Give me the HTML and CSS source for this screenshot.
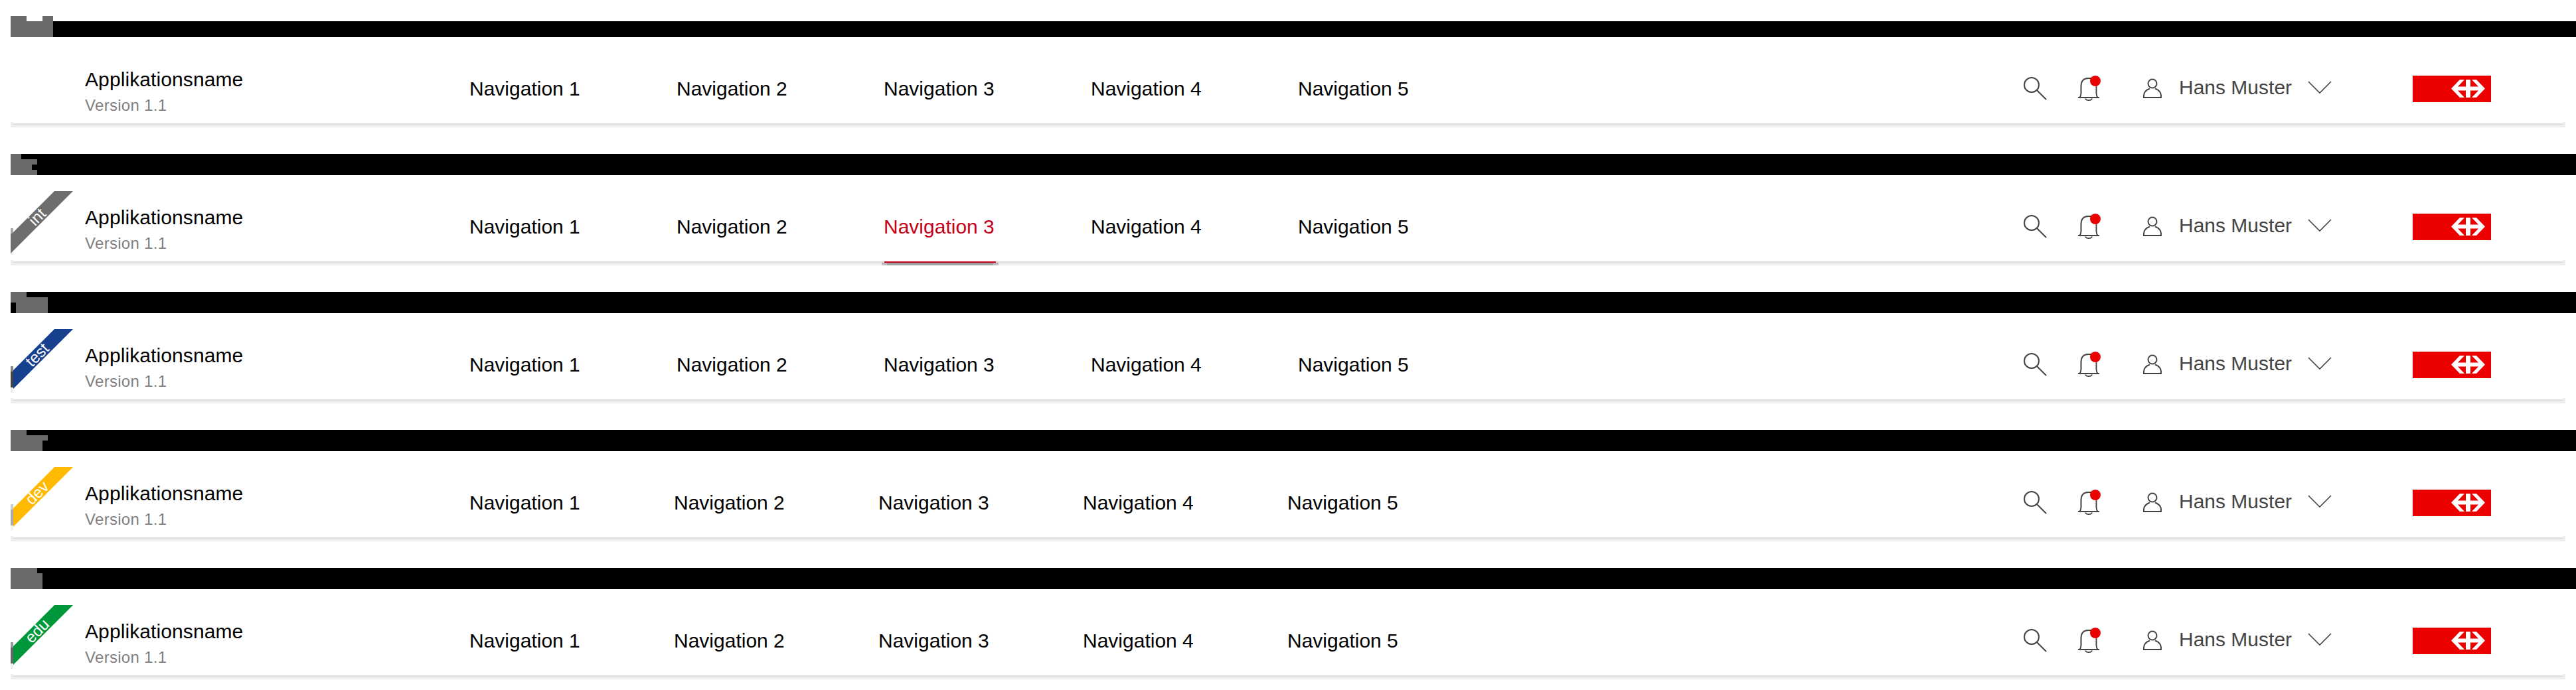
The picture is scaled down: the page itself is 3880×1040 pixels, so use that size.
FILE: index.html
```html
<!DOCTYPE html>
<html lang="de">
<head>
<meta charset="utf-8">
<title>Header</title>
<link rel="stylesheet" href="styles.css">
</head>
<body>
<svg class="defs" width="0" height="0" aria-hidden="true">
  <symbol id="i-search" viewBox="0 0 48 48"><circle cx="22" cy="22" r="11" fill="none" stroke="#444" stroke-width="2"/><path d="M30 30 44 44" fill="none" stroke="#444" stroke-width="2"/></symbol>
  <symbol id="i-bell" viewBox="0 0 48 48"><path d="M10.500 41C12 39 12.500 37 12.500 34V24C12.500 16 17 12 24 12S35.500 16 35.500 24V34C35.500 37 36 39 37.500 41" fill="none" stroke="#444" stroke-width="2"/><path d="M8 41H40" stroke="#444" stroke-width="2"/><path d="M19 42.500C20 46 28 46 29 42.500" fill="none" stroke="#444" stroke-width="1.600"/><path d="M20 12H30" stroke="#444" stroke-width="2"/><circle cx="34" cy="16" r="8" fill="#eb0000"/></symbol>
  <symbol id="i-user" viewBox="0 0 48 48"><circle cx="24" cy="20" r="6.500" fill="none" stroke="#444" stroke-width="2"/><path d="M11 41V38C11 32.500 15 29.500 20 27.500M37 41V38C37 32.500 33 29.500 28 27.500" fill="none" stroke="#444" stroke-width="2"/><path d="M10 41H38" stroke="#444" stroke-width="2"/></symbol>
  <symbol id="i-chevron" viewBox="0 0 36 20"><path d="M1 1 18 18 35 1" fill="none" stroke="#444" stroke-width="1.600"/></symbol>
  <symbol id="i-sbb" viewBox="0 0 118 40"><rect width="118" height="40" fill="#eb0000"/><path fill="#fff" transform="translate(58 6)" d="M13 0H20L10 10.500H22V0H29V10.500H41L31 0H38L51 13.500 38 27H31L41 16.500H29V27H22V16.500H10L20 27H13L0 13.500Z"/></symbol>
</svg>

<section class="row">
  <div class="topbar topbar-first"><svg class="mask" width="64" height="32" viewBox="0 0 64 32"><path fill="#6b6b6b" d="M0 0H24V8H48V0H64V32H0z"/></svg></div>
  <header class="header">
    <div class="brand"><div class="app-name">Applikationsname</div><div class="version">Version 1.1</div></div>
    <nav class="nav"><a class="tab">Navigation 1</a><a class="tab">Navigation 2</a><a class="tab">Navigation 3</a><a class="tab">Navigation 4</a><a class="tab">Navigation 5</a></nav>
    <div class="tools">
      <svg class="icon ic-search"><use href="#i-search"/></svg><svg class="icon ic-bell"><use href="#i-bell"/></svg><svg class="icon ic-user"><use href="#i-user"/></svg><span class="user-name">Hans Muster</span><svg class="chevron"><use href="#i-chevron"/></svg>
    </div>
    <svg class="logo"><use href="#i-sbb"/></svg>
  </header>
</section>

<section class="row">
  <div class="topbar"><svg class="mask" width="64" height="32" viewBox="0 0 64 32"><path fill="#6b6b6b" d="M0 0H16V8H40V16H32V24H40V32H0z"/></svg></div>
  <header class="header">
    <div class="strip strip-int"></div>
    <div class="ribbon ribbon-int"><span class="ribbon-text">int</span></div>
    <div class="brand"><div class="app-name">Applikationsname</div><div class="version">Version 1.1</div></div>
    <nav class="nav"><a class="tab">Navigation 1</a><a class="tab">Navigation 2</a><a class="tab tab-active">Navigation 3</a><a class="tab">Navigation 4</a><a class="tab">Navigation 5</a></nav>
    <div class="tools">
      <svg class="icon ic-search"><use href="#i-search"/></svg><svg class="icon ic-bell"><use href="#i-bell"/></svg><svg class="icon ic-user"><use href="#i-user"/></svg><span class="user-name">Hans Muster</span><svg class="chevron"><use href="#i-chevron"/></svg>
    </div>
    <svg class="logo"><use href="#i-sbb"/></svg>
  </header>
</section>

<section class="row">
  <div class="topbar"><svg class="mask" width="64" height="32" viewBox="0 0 64 32"><path fill="#6b6b6b" d="M0 0H24V8H56V32H8V16H0z"/></svg></div>
  <header class="header">
    <div class="strip strip-test"></div>
    <div class="ribbon ribbon-test"><span class="ribbon-text">test</span></div>
    <div class="brand"><div class="app-name">Applikationsname</div><div class="version">Version 1.1</div></div>
    <nav class="nav"><a class="tab">Navigation 1</a><a class="tab">Navigation 2</a><a class="tab">Navigation 3</a><a class="tab">Navigation 4</a><a class="tab">Navigation 5</a></nav>
    <div class="tools">
      <svg class="icon ic-search"><use href="#i-search"/></svg><svg class="icon ic-bell"><use href="#i-bell"/></svg><svg class="icon ic-user"><use href="#i-user"/></svg><span class="user-name">Hans Muster</span><svg class="chevron"><use href="#i-chevron"/></svg>
    </div>
    <svg class="logo"><use href="#i-sbb"/></svg>
  </header>
</section>

<section class="row">
  <div class="topbar"><svg class="mask" width="64" height="32" viewBox="0 0 64 32"><path fill="#6b6b6b" d="M0 0H24V8H56V16H48V32H0z"/></svg></div>
  <header class="header">
    <div class="strip strip-dev"></div>
    <div class="ribbon ribbon-dev"><span class="ribbon-text">dev</span></div>
    <div class="brand"><div class="app-name">Applikationsname</div><div class="version">Version 1.1</div></div>
    <nav class="nav nav-tight"><a class="tab">Navigation 1</a><a class="tab">Navigation 2</a><a class="tab">Navigation 3</a><a class="tab">Navigation 4</a><a class="tab">Navigation 5</a></nav>
    <div class="tools">
      <svg class="icon ic-search"><use href="#i-search"/></svg><svg class="icon ic-bell"><use href="#i-bell"/></svg><svg class="icon ic-user"><use href="#i-user"/></svg><span class="user-name">Hans Muster</span><svg class="chevron"><use href="#i-chevron"/></svg>
    </div>
    <svg class="logo"><use href="#i-sbb"/></svg>
  </header>
</section>

<section class="row row-last">
  <div class="topbar"><svg class="mask" width="64" height="32" viewBox="0 0 64 32"><path fill="#6b6b6b" d="M0 0H40V8H48V32H0z"/></svg></div>
  <header class="header">
    <div class="strip strip-edu"></div>
    <div class="ribbon ribbon-edu"><span class="ribbon-text">edu</span></div>
    <div class="brand"><div class="app-name">Applikationsname</div><div class="version">Version 1.1</div></div>
    <nav class="nav nav-tight"><a class="tab">Navigation 1</a><a class="tab">Navigation 2</a><a class="tab">Navigation 3</a><a class="tab">Navigation 4</a><a class="tab">Navigation 5</a></nav>
    <div class="tools">
      <svg class="icon ic-search"><use href="#i-search"/></svg><svg class="icon ic-bell"><use href="#i-bell"/></svg><svg class="icon ic-user"><use href="#i-user"/></svg><span class="user-name">Hans Muster</span><svg class="chevron"><use href="#i-chevron"/></svg>
    </div>
    <svg class="logo"><use href="#i-sbb"/></svg>
  </header>
</section>
</body>
</html>
```
FILE: styles.css
```css
* { box-sizing: border-box; }
html, body { margin: 0; height: 1040px; overflow: hidden; background: #fff; }
body { padding: 24px 0 0 16px; font-family: "Liberation Sans", Arial, sans-serif; width: 3880px; }
.defs { position: absolute; }
.row { width: 3864px; height: 208px; display: flex; flex-direction: column; }
.row-last { height: 184px; }
.topbar { height: 32px; background: #000; position: relative; flex: none; }
.topbar-first { background: linear-gradient(#fff 8px, #000 8px); }
.mask { display: block; position: absolute; left: 0; top: 0; }
.header { position: relative; flex: none; width: 3848px; height: 136px; display: flex; align-items: flex-start; padding-left: 112px; background: #fff; border-bottom: 4px solid #eee; }
.header::before { content: ""; position: absolute; left: 0; right: 0; top: 128px; height: 4px; background: linear-gradient(90deg, #eee 4px, transparent 4px, transparent calc(100% - 4px), #eee calc(100% - 4px)); }
.header::after { content: ""; position: absolute; left: 4px; right: 4px; top: 130px; height: 2px; background: #ddd; }
.brand { width: 579px; padding-top: 44px; flex: none; }
.app-name { font-size: 30px; line-height: 40px; color: #000; letter-spacing: .1px; }
.version { font-size: 24px; line-height: 38px; color: #808080; letter-spacing: .3px; }
.nav { display: flex; gap: 144px; flex: none; }
.nav-tight { gap: 140px; }
.tab { width: 168px; height: 132px; padding-top: 58px; font-size: 30px; line-height: 40px; color: #000; white-space: nowrap; position: relative; }
.tab-active { color: #c60018; }
.tab-active::before { content: ""; position: absolute; z-index: 2; left: 1px; right: -1px; top: 130px; height: 2px; background: #c60018; }
.tab-active::after { content: ""; position: absolute; z-index: 2; left: -3px; right: -5px; top: 132px; height: 4px; background: linear-gradient(90deg, #bbb 8px, #a0a0a0 8px, #a0a0a0 calc(100% - 8px), #bbb calc(100% - 8px)); }
.tools { position: absolute; left: 3012px; top: 0; height: 130px; display: flex; }
.icon { width: 48px; height: 48px; flex: none; margin-top: 50px; }
.ic-search { margin-left: 10px; }
.ic-bell { margin-left: 36px; }
.ic-user { margin-left: 48px; }
.user-name { margin-left: 16px; padding-top: 56px; font-size: 30px; line-height: 40px; color: #444; white-space: nowrap; }
.chevron { width: 36px; height: 20px; margin: 66px 0 0 24px; flex: none; }
.logo { position: absolute; left: 3618px; top: 58px; width: 118px; height: 40px; }
.strip { position: absolute; left: 0; top: 80px; width: 4px; height: 40px; }
.strip-int { background: linear-gradient(#aaa 8px, #777 8px, #777 32px, #eee 32px); }
.strip-test { background: linear-gradient(#888 8px, #444 8px, #444 32px, #eee 32px); }
.strip-dev { background: linear-gradient(#ccc 8px, #aaa 8px, #aaa 32px, #f4f4f4 32px); }
.strip-edu { background: linear-gradient(#999 8px, #666 8px, #666 32px, #eee 32px); }
.ribbon { position: absolute; left: 0; top: 24px; width: 94px; height: 94px; clip-path: polygon(66px 0, 94px 0, 4px 90px, 4px 62px); }
.ribbon-int { background: #6e6e6e; clip-path: polygon(66px 0, 94px 0, 0 94px, 0 66px); }
.ribbon-test { background: #163f8d; }
.ribbon-dev { background: #ffb900; }
.ribbon-edu { background: #00973b; }
.ribbon-text { position: absolute; left: 0; top: 25px; width: 80px; text-align: center; font-size: 24px; line-height: 28px; color: #fff; transform: rotate(-45deg); }
```
